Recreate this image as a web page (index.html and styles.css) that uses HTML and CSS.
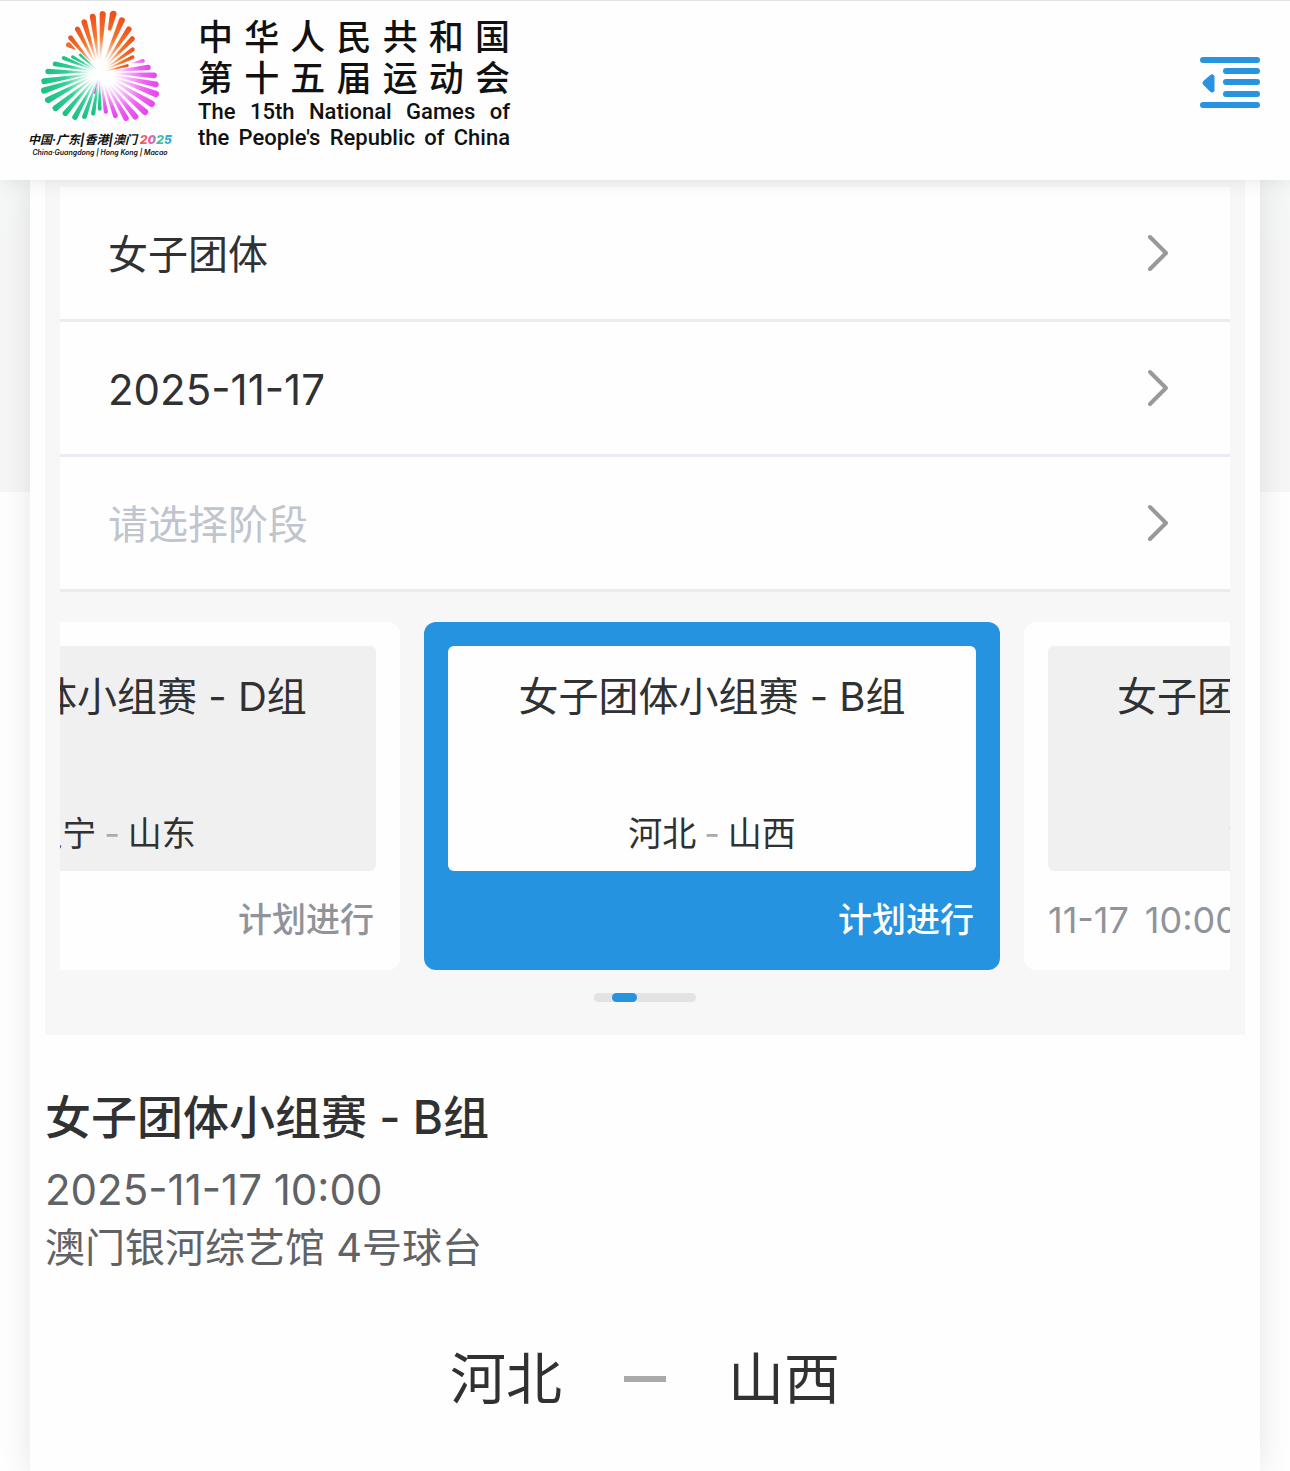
FILE: index.html
```html
<!DOCTYPE html>
<html lang="zh-CN">

<head>
  <meta charset="UTF-8" />
  <meta name="viewport" content="width=device-width, initial-scale=1.0" />
  <title>女子团体小组赛 - B组</title>
  <link rel="stylesheet" href="styles.css">
</head>

<body>
  <header class="header">
    <a class="brand" href="#">
      <span class="emblem">
        <svg class="emblem-mark" viewBox="56 22 366 344" aria-hidden="true">
          <defs>
            <linearGradient id="orange" gradientUnits="userSpaceOnUse" x1="0" x2="180" y1="0" y2="0">
              <stop offset="0.2" stop-color="#fff" />
              <stop offset="0.6" stop-color="#f4762c" />
              <stop offset="1" stop-color="#ee4f1c" />
            </linearGradient>
            <linearGradient id="pink" gradientUnits="userSpaceOnUse" x1="0" x2="180" y1="0" y2="0">
              <stop offset="0.25" stop-color="#fff" />
              <stop offset="0.75" stop-color="#ec62f2" />
              <stop offset="1" stop-color="#e444f0" />
            </linearGradient>
            <linearGradient id="green" gradientUnits="userSpaceOnUse" x1="0" x2="180" y1="0" y2="0">
              <stop offset="0.15" stop-color="#fff" />
              <stop offset="0.6" stop-color="#2fcf96" />
              <stop offset="1" stop-color="#1dbf80" />
            </linearGradient>
            <path id="petal" d="M10 0L170 -9A9 9 0 0 1 170 9Z" />
          </defs>
          <g transform="translate(238 215)">
            <g fill="url(#orange)">
              <use href="#petal" transform="rotate(230) scale(0.8)" />
              <use href="#petal" transform="rotate(243) scale(0.86)" />
              <use href="#petal" transform="rotate(253) scale(0.93)" />
              <use href="#petal" transform="rotate(263) scale(0.99)" />
              <use href="#petal" transform="rotate(273) scale(1.03)" />
              <path d="M130 -5L180 -10A10 10 0 0 1 180 10L130 5Z" transform="rotate(283)" />
              <use href="#petal" transform="rotate(293) scale(1)" />
              <use href="#petal" transform="rotate(304) scale(0.92)" />
              <use href="#petal" transform="rotate(314) scale(0.83)" />
              <use href="#petal" transform="rotate(325) scale(0.71)" />
              <use href="#petal" transform="rotate(335) scale(0.64)" />
              <use href="#petal" transform="rotate(346) scale(0.5)" />
            </g>
            <!-- loose tip at the left of the orange fan -->
            <path fill="#f06a35" d="M124 -9A8 8 0 0 1 124 7L98 3Z" transform="rotate(222)" />
            <g fill="url(#pink)">
              <path d="M100 -2L134 -6A5 5 0 0 1 134 6Z" transform="rotate(345)" />
              <use href="#petal" transform="rotate(354) scale(0.86)" />
              <use href="#petal" transform="rotate(3) scale(0.96)" />
              <use href="#petal" transform="rotate(12) scale(1.01)" />
              <use href="#petal" transform="rotate(21) scale(1.06)" />
              <use href="#petal" transform="rotate(31) scale(1.07)" />
              <use href="#petal" transform="rotate(41) scale(1.06)" />
              <use href="#petal" transform="rotate(51) scale(1)" />
              <use href="#petal" transform="rotate(60) scale(0.93)" />
              <use href="#petal" transform="rotate(70) scale(0.81)" />
              <use href="#petal" transform="rotate(81) scale(0.7)" />
              <use href="#petal" transform="rotate(104) scale(0.37)" />
            </g>
            <g fill="url(#green)">
              <use href="#petal" transform="rotate(90) scale(0.64)" />
              <use href="#petal" transform="rotate(99) scale(0.73)" />
              <use href="#petal" transform="rotate(109) scale(0.82)" />
              <use href="#petal" transform="rotate(119) scale(0.9)" />
              <use href="#petal" transform="rotate(130) scale(0.94)" />
              <use href="#petal" transform="rotate(141) scale(1)" />
              <use href="#petal" transform="rotate(152) scale(1.03)" />
              <use href="#petal" transform="rotate(162) scale(1.03)" />
              <use href="#petal" transform="rotate(171) scale(0.99)" />
              <use href="#petal" transform="rotate(181) scale(0.91)" />
              <use href="#petal" transform="rotate(191) scale(0.8)" />
              <use href="#petal" transform="rotate(202) scale(0.68)" />
              <use href="#petal" transform="rotate(210) scale(0.55)" />
              <use href="#petal" transform="rotate(222) scale(0.46)" />
            </g>
          </g>
        </svg>
        <span class="emblem-cn">中国·广东|香港|澳门 <b class="emblem-year">2025</b></span>
        <span class="emblem-en">China·Guangdong | Hong Kong | Macao</span>
      </span>
      <span class="brand-name">
        <span class="brand-cn">中华人民共和国</span>
        <span class="brand-cn">第十五届运动会</span>
        <span class="brand-en">The 15th National Games of</span>
        <span class="brand-en">the People's Republic of China</span>
      </span>
    </a>
    <button class="menu-btn" type="button" aria-label="菜单">
      <svg width="60" height="51" viewBox="0 0 60 51" fill="none" stroke="#2893de" stroke-width="6" stroke-linecap="round">
        <path d="M3 3H57M26 14H57M26 25H57M26 37H57M3 48H57" />
        <path d="M5 26L12 20V33Z" fill="#2893de" stroke-width="5" stroke-linejoin="round" />
      </svg>
    </button>
  </header>

  <main class="page">
    <section class="panel">
      <form class="filters">
        <div class="filter">
          <select id="event" aria-label="项目">
            <option>女子团体</option>
          </select>
          <svg class="arrow" viewBox="0 0 22 38"><path d="M3 3L19 19L3 35" /></svg>
        </div>
        <div class="filter">
          <select id="date" class="number" aria-label="日期">
            <option>2025-11-17</option>
          </select>
          <svg class="arrow" viewBox="0 0 22 38"><path d="M3 3L19 19L3 35" /></svg>
        </div>
        <div class="filter">
          <select id="stage" class="empty" aria-label="阶段">
            <option>请选择阶段</option>
          </select>
          <svg class="arrow" viewBox="0 0 22 38"><path d="M3 3L19 19L3 35" /></svg>
        </div>
      </form>

      <div class="slider">
        <div class="track">
          <article class="card">
            <div class="card-body">
              <h3>女子团体小组赛 - D组</h3>
              <p class="teams">辽宁<i>-</i>山东</p>
            </div>
            <div class="card-foot">
              <span class="status">计划进行</span>
            </div>
          </article>
          <article class="card active">
            <div class="card-body">
              <h3>女子团体小组赛 - B组</h3>
              <p class="teams">河北<i>-</i>山西</p>
            </div>
            <div class="card-foot">
              <span class="status">计划进行</span>
            </div>
          </article>
          <article class="card">
            <div class="card-body">
              <h3>女子团体小组赛 - C组</h3>
              <p class="teams">江苏<i>-</i>上海</p>
            </div>
            <div class="card-foot">
              <time><span>11-17</span><span>10:00</span></time>
            </div>
          </article>
        </div>
      </div>
      <div class="scrollbar"><div class="thumb"></div></div>
    </section>

    <section class="detail">
      <h2>女子团体小组赛 - B组</h2>
      <p class="number">2025-11-17 10:00</p>
      <p>澳门银河综艺馆 4号球台</p>
      <div class="score">
        <span>河北</span>
        <span class="dash"></span>
        <span>山西</span>
      </div>
    </section>
  </main>
</body>

</html>
```
FILE: styles.css
```css
* {
  box-sizing: border-box;
}

body {
  margin: 0;
  font-family: Inter, 'Noto Sans CJK SC', sans-serif;
  font-size: 40px;
  color: #303133;
  background: #fefefe linear-gradient(#f4f9f8, #f6f6f6 250px) no-repeat;
  background-size: 100% 492px;
}

h2,
h3,
p {
  margin: 0;
}

.header {
  position: sticky;
  top: 0;
  z-index: 10;
  display: flex;
  justify-content: space-between;
  height: 180px;
  padding: 0 30px;
  background: #fefefe;
  border-top: 1px solid #e2e2e2;
  box-shadow: 0 0 20px rgba(0, 0, 0, 0.1);
}

.brand {
  display: flex;
  gap: 28px;
  color: #111;
  text-decoration: none;
}

.emblem {
  display: flex;
  flex-direction: column;
  align-items: center;
  width: 140px;
  padding-top: 7px;
  white-space: nowrap;
}

.emblem-mark {
  width: 122px;
  height: 115px;
}

.emblem-cn {
  margin-top: 8px;
  font-size: 12px;
  line-height: 18px;
  font-weight: 700;
  font-style: italic;
}

.emblem-year {
  background: linear-gradient(to right, #f4622a, #e85ac8 35%, #3cc99a 60%, #3a9df0);
  background-clip: text;
  -webkit-background-clip: text;
  color: transparent;
}

.emblem-en {
  font-size: 7px;
  line-height: 8px;
  font-weight: 600;
  font-style: italic;
}

.brand-name {
  display: flex;
  flex-direction: column;
  width: 312px;
  padding-top: 16px;
}

.brand-cn {
  font-size: 35px;
  line-height: 41px;
  font-weight: 500;
  text-align-last: justify;
}

.brand-en {
  font-family: Roboto, sans-serif;
  font-size: 22px;
  line-height: 26px;
  font-weight: 500;
  text-align-last: justify;
  white-space: nowrap;
}

.menu-btn {
  align-self: flex-start;
  margin-top: 56px;
  padding: 0;
  border: none;
  background: none;
  cursor: pointer;
}

.menu-btn svg {
  display: block;
}

.page {
  min-height: calc(100vh - 180px);
  margin: 0 30px;
  padding: 0 15px;
  background: #fefefe;
  box-shadow: 0 0 30px rgba(0, 0, 0, 0.1);
}

.panel {
  padding: 7px 15px 33px;
  background: #f7f7f7;
}

.filter {
  display: flex;
  align-items: center;
  height: 135px;
  padding: 0 61px 0 48px;
  background: #fefefe;
  border-bottom: 3px solid #ebebf2;
}

.filter select {
  flex: 1;
  height: 100%;
  padding: 2px 0 0;
  border: none;
  appearance: none;
  background: none;
  font: inherit;
  color: #303133;
}

.filter .empty {
  color: #c0c4cc;
}

.filter .number,
.detail .number {
  font-size: 42px;
}

.arrow {
  width: 22px;
  height: 38px;
  fill: none;
  stroke: #999;
  stroke-width: 4;
  stroke-linecap: round;
  stroke-linejoin: round;
}

.slider {
  margin-top: 30px;
  overflow: hidden;
}

.track {
  display: flex;
  gap: 24px;
  margin-left: -236px;
}

.card {
  flex: 0 0 576px;
  padding: 24px;
  border-radius: 12px;
  background: #fefefe;
  color: #303133;
}

.card-body {
  display: flex;
  flex-direction: column;
  justify-content: space-between;
  height: 225px;
  padding: 22px 0 12px;
  border-radius: 6px;
  background: #f0f0f0;
  text-align: center;
}

.card h3 {
  font-size: 40px;
  line-height: 58px;
  font-weight: 400;
}

.teams {
  display: flex;
  justify-content: center;
  gap: 8px;
  font-size: 34px;
  line-height: 50px;
}

.teams i {
  color: #aaa;
  font-style: normal;
}

.card-foot {
  display: flex;
  height: 75px;
  padding: 24px 2px 0 0;
  font-size: 34px;
  line-height: 50px;
  color: #909399;
}

.card-foot time {
  display: flex;
  gap: 16px;
  font-size: 36px;
}

.status {
  margin-left: auto;
  font-weight: 500;
}

.card.active {
  background: #2593e0;
}

.card.active .card-body {
  background: #fefefe;
}

.card.active .status {
  color: #fff;
}

.scrollbar {
  width: 102px;
  height: 9px;
  margin: 23px auto 0;
  padding-left: 18px;
  border-radius: 5px;
  background: #e3e3e3;
}

.thumb {
  width: 25px;
  height: 9px;
  border-radius: 5px;
  background: #2593e0;
}

.detail {
  padding: 48px 0 50px;
}

.detail h2 {
  margin-bottom: 10px;
  font-size: 46px;
  line-height: 68px;
  font-weight: 500;
}

.detail p {
  line-height: 58px;
  color: #606266;
}

.score {
  display: flex;
  justify-content: center;
  align-items: center;
  gap: 62px;
  margin-top: 62px;
  font-size: 56px;
  line-height: 80px;
}

.dash {
  width: 42px;
  height: 6px;
  background: #aaa;
}
```
